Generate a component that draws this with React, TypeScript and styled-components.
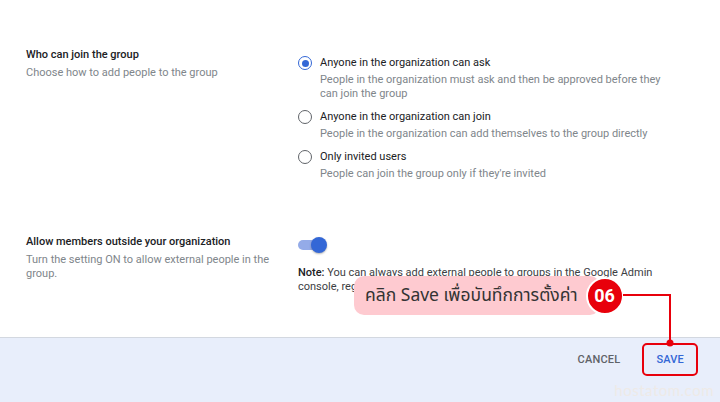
import React from "react";
import styled, { createGlobalStyle } from "styled-components";

const Global = createGlobalStyle`
  html, body { margin: 0; padding: 0; }
  body {
    font-family: Roboto, "Noto Sans", Arial, sans-serif;
    background: #ffffff;
    -webkit-font-smoothing: antialiased;
  }
  * { box-sizing: border-box; }
`;

const Page = styled.div`
  position: relative;
  width: 720px;
  height: 402px;
  overflow: hidden;
  display: flex;
  flex-direction: column;
`;

const Main = styled.div`
  height: 337px;
  background: #ffffff;
  padding-top: 47px;
  display: flex;
  flex-direction: column;
`;

const Section = styled.section<{ $gap?: number }>`
  display: grid;
  grid-template-columns: 272px 374px;
  padding-left: 26px;
  margin-top: ${(p) => p.$gap ?? 0}px;
`;

const LeftCol = styled.div`
  padding-right: 20px;
`;

const Title = styled.div`
  font-size: 11px;
  line-height: 16px;
  font-weight: 500;
  color: #202124;
`;

const Sub = styled.div`
  margin-top: 3px;
  font-size: 11px;
  line-height: 14px;
  color: #80868b;
`;

const RightCol = styled.div<{ $top: number }>`
  padding-top: ${(p) => p.$top}px;
  display: flex;
  flex-direction: column;
`;

const Options = styled.div`
  display: flex;
  flex-direction: column;
  gap: 8px;
`;

const Option = styled.label`
  display: grid;
  grid-template-columns: 14px 1fr;
  column-gap: 8px;
  align-items: start;
`;

const Radio = styled.span<{ $checked?: boolean }>`
  width: 14px;
  height: 14px;
  margin-top: 1px;
  border-radius: 50%;
  border: ${(p) => (p.$checked ? "1.6px solid #3367d6" : "1.2px solid #5f6368")};
  display: flex;
  align-items: center;
  justify-content: center;
  &::after {
    content: "";
    width: 7px;
    height: 7px;
    border-radius: 50%;
    background: ${(p) => (p.$checked ? "#3367d6" : "transparent")};
  }
`;

const OptText = styled.div`
  display: flex;
  flex-direction: column;
`;

const OptLabel = styled.div`
  font-size: 11px;
  line-height: 16px;
  color: #202124;
`;

const OptDesc = styled.div`
  margin-top: 2px;
  font-size: 11px;
  line-height: 14px;
  color: #80868b;
`;

const Toggle = styled.div`
  position: relative;
  width: 26px;
  height: 10px;
  margin-top: 3px;
  border-radius: 5px;
  background: #94abe8;
`;

const Thumb = styled.span`
  position: absolute;
  right: -3px;
  top: -3px;
  width: 16px;
  height: 16px;
  border-radius: 50%;
  background: #3367d6;
  box-shadow: 0 1px 2px rgba(0, 0, 0, 0.3);
`;

const Note = styled.div`
  margin-top: 16px;
  font-size: 11px;
  line-height: 14px;
  color: #3c4043;
  b { font-weight: 500; color: #202124; }
`;

const Footer = styled.footer`
  flex: 1;
  background: #e8eefb;
  border-top: 1px solid #d3d8e0;
  display: flex;
  justify-content: flex-end;
  align-items: flex-start;
  gap: 8px;
  padding: 5px 22px 0 0;
`;

const Btn = styled.button<{ $primary?: boolean; $highlight?: boolean }>`
  height: 33px;
  padding: 0 12px;
  border: 2px solid ${(p) => (p.$highlight ? "#e8000b" : "transparent")};
  border-radius: 5px;
  background: transparent;
  font-family: Roboto, Arial, sans-serif;
  font-size: 11px;
  font-weight: 500;
  letter-spacing: 0.2px;
  color: ${(p) => (p.$primary ? "#3367d6" : "#5f6368")};
  cursor: pointer;
`;

const Watermark = styled.div`
  position: absolute;
  right: 6px;
  bottom: 3px;
  font-family: Lato, "Open Sans", sans-serif;
  font-size: 15px;
  letter-spacing: 0.5px;
  color: #eeeae7;
`;

const Callout = styled.div`
  position: absolute;
  left: 354px;
  top: 276px;
  display: flex;
  align-items: center;
`;

const Bubble = styled.div`
  height: 39px;
  padding: 0 22px 0 11px;
  border-radius: 10px;
  background: #fecad0;
  display: flex;
  align-items: center;
  font-family: "Noto Sans Thai", "Noto Sans", "DejaVu Sans", sans-serif;
  font-size: 17.5px;
  color: #333333;
  white-space: nowrap;
`;

const Badge = styled.div`
  margin-left: -14px;
  width: 38px;
  height: 38px;
  border-radius: 50%;
  border: 2px solid #ffffff;
  background: #e8000b;
  color: #ffffff;
  display: flex;
  align-items: center;
  justify-content: center;
  font-family: Roboto, Arial, sans-serif;
  font-weight: 700;
  font-size: 18px;
`;

const Connector = styled.svg`
  position: absolute;
  left: 0;
  top: 0;
  pointer-events: none;
`;

export default function App() {
  return (
    <Page>
      <Global />
      <Main>
        <Section>
          <LeftCol>
            <Title>Who can join the group</Title>
            <Sub>Choose how to add people to the group</Sub>
          </LeftCol>
          <RightCol $top={8}>
            <Options>
              <Option>
                <Radio $checked />
                <OptText>
                  <OptLabel>Anyone in the organization can ask</OptLabel>
                  <OptDesc>
                    People in the organization must ask and then be approved before they can join the group
                  </OptDesc>
                </OptText>
              </Option>
              <Option>
                <Radio />
                <OptText>
                  <OptLabel>Anyone in the organization can join</OptLabel>
                  <OptDesc>People in the organization can add themselves to the group directly</OptDesc>
                </OptText>
              </Option>
              <Option>
                <Radio />
                <OptText>
                  <OptLabel>Only invited users</OptLabel>
                  <OptDesc>People can join the group only if they're invited</OptDesc>
                </OptText>
              </Option>
            </Options>
          </RightCol>
        </Section>
        <Section $gap={53}>
          <LeftCol>
            <Title>Allow members outside your organization</Title>
            <Sub>Turn the setting ON to allow external people in the group.</Sub>
          </LeftCol>
          <RightCol $top={3}>
            <Toggle>
              <Thumb />
            </Toggle>
            <Note>
              <b>Note:</b> You can always add external people to groups in the Google Admin console, regardless of this setting.
            </Note>
          </RightCol>
        </Section>
      </Main>
      <Footer>
        <Btn>CANCEL</Btn>
        <Btn $primary $highlight>SAVE</Btn>
      </Footer>
      <Watermark>hostatom.com</Watermark>
      <Callout>
        <Bubble>คลิก Save เพื่อบันทึกการตั้งค่า</Bubble>
        <Badge>06</Badge>
      </Callout>
      <Connector width="720" height="402" viewBox="0 0 720 402">
        <path d="M623 295 H670 V343" fill="none" stroke="#e8000b" strokeWidth="2" />
        <circle cx="670" cy="343" r="3.5" fill="#e8000b" />
      </Connector>
    </Page>
  );
}
